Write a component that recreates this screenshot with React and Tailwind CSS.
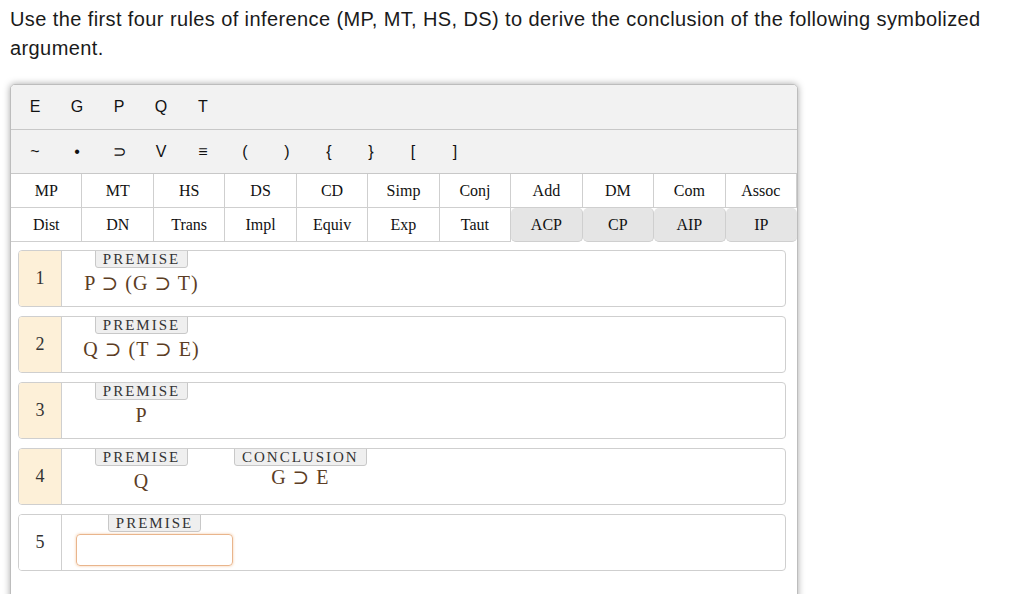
import React from "react";

const serif = { fontFamily: '"Liberation Serif", "DejaVu Serif", serif' };

const letters = ["E", "G", "P", "Q", "T"];
const symbols = ["~", "•", "⊃", "V", "≡", "(", ")", "{", "}", "[", "]"];
const rules1 = ["MP", "MT", "HS", "DS", "CD", "Simp", "Conj", "Add", "DM", "Com", "Assoc"];
const rules2 = ["Dist", "DN", "Trans", "Impl", "Equiv", "Exp", "Taut", "ACP", "CP", "AIP", "IP"];
const grayRules = ["ACP", "CP", "AIP", "IP"];

function Badge({ children }) {
  return (
    <div
      className="border border-[#c8c8c8] bg-[#efefef] rounded-b-[3px] px-[7px] text-[15px] leading-[16px] tracking-[2px] text-[#333] -mt-px"
      style={serif}
    >
      {children}
    </div>
  );
}

function Line({ n, formula, conclusion, input, cream = true }) {
  return (
    <div className="flex h-[57px] border border-[#cfcfcf] rounded-[4px] overflow-hidden bg-white">
      <div
        className={`w-[43px] shrink-0 flex items-center justify-center border-r border-[#cfcfcf] text-[18px] text-[#333] ${cream ? "bg-[#fdf0d8]" : "bg-white"}`}
        style={serif}
      >
        {n}
      </div>
      <div className="flex items-start pl-[14px] gap-[27px]">
        <div className="flex flex-col items-center min-w-[131px]">
          <Badge>PREMISE</Badge>
          {input ? (
            <div className="mt-[2px] w-[157px] h-[32px] rounded-[4px] border border-[#e9b58c] shadow-[0_0_3px_#f3c9a4]" />
          ) : (
            <div className="text-[20px] leading-[24px] mt-[3px] text-[#5c3d24] tracking-[1px]" style={serif}>
              {formula}
            </div>
          )}
        </div>
        {conclusion && (
          <div className="flex flex-col items-center">
            <Badge>CONCLUSION</Badge>
            <div className="text-[20px] leading-[22px] text-[#5c3d24] tracking-[1px]" style={serif}>
              {conclusion}
            </div>
          </div>
        )}
      </div>
    </div>
  );
}

export default function App() {
  return (
    <div className="w-[1024px] h-[594px] overflow-hidden bg-white" style={{ fontFamily: '"Liberation Sans", Arial, sans-serif' }}>
      <div className="pl-[10px] pt-[5px] w-[1005px] text-[20px] leading-[29px] tracking-[0.4px] text-[#1a1a1a]">
        Use the first four rules of inference (MP, MT, HS, DS) to derive the conclusion of the following symbolized argument.
      </div>
      <div className="ml-[10px] mt-[21px] w-[788px] border border-[#bdbdbd] rounded-[5px] shadow-[0_0_7px_rgba(0,0,0,0.35)] bg-white pb-[60px] overflow-hidden">
        <div className="h-[45px] bg-[#f2f2f2] border-b border-[#c8c8c8] flex items-center pl-[3px]">
          {letters.map((l) => (
            <div key={l} className="w-[42px] text-center text-[16px] text-[#111]">
              {l}
            </div>
          ))}
        </div>
        <div className="h-[44px] bg-[#f2f2f2] border-b border-[#c8c8c8] flex items-center pl-[3px]">
          {symbols.map((s) => (
            <div key={s} className="w-[42px] text-center text-[16px] text-[#111]">
              {s}
            </div>
          ))}
        </div>
        <div className="grid grid-cols-11" style={serif}>
          {rules1.map((r) => (
            <div key={r} className="h-[34px] flex items-center justify-center border-r border-b border-[#cfcfcf] text-[16px] text-[#111] last:border-r-0">
              {r}
            </div>
          ))}
          {rules2.map((r, i) => (
            <div
              key={r}
              className={`h-[34px] flex items-center justify-center border-b border-[#cfcfcf] text-[16px] text-[#111] ${i < 10 ? "border-r" : ""} ${grayRules.includes(r) ? "bg-[#e5e5e5] rounded-[5px]" : ""}`}
            >
              {r}
            </div>
          ))}
        </div>
        <div className="flex flex-col gap-[9px] pt-[8px] pl-[7px] pr-[11px]">
          <Line n={1} formula="P ⊃ (G ⊃ T)" />
          <Line n={2} formula="Q ⊃ (T ⊃ E)" />
          <Line n={3} formula="P" />
          <Line n={4} formula="Q" conclusion="G ⊃ E" />
          <Line n={5} input cream={false} />
        </div>
      </div>
    </div>
  );
}
